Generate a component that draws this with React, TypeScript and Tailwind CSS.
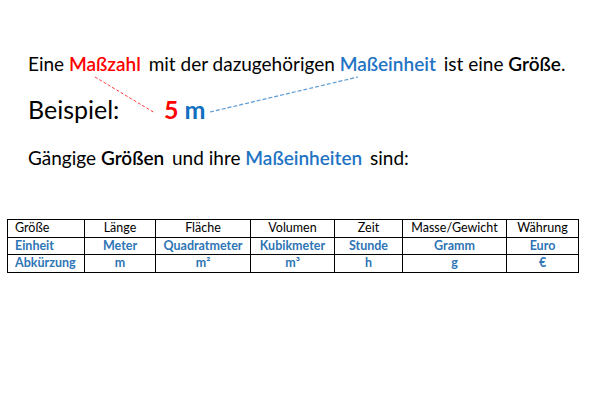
const rows = [
  {
    label: "Größe",
    bold: false,
    cells: ["Länge", "Fläche", "Volumen", "Zeit", "Masse/Gewicht", "Währung"],
  },
  {
    label: "Einheit",
    bold: true,
    cells: ["Meter", "Quadratmeter", "Kubikmeter", "Stunde", "Gramm", "Euro"],
  },
  {
    label: "Abkürzung",
    bold: true,
    cells: ["m", "m²", "m³", "h", "g", "€"],
  },
];

const widths = ["w-[77px]", "w-[71px]", "w-[95px]", "w-[84px]", "w-[68px]", "w-[104px]", "w-[72px]"];

export default function App() {
  return (
    <div className="relative h-[400px] w-[600px] overflow-hidden bg-white font-['Lato',sans-serif] text-black">
      {/* dashed connector lines */}
      <svg className="pointer-events-none absolute left-0 top-0" width="600" height="400">
        <line x1="95" y1="77" x2="155" y2="113" stroke="#ff3b3b" strokeWidth="1" strokeDasharray="3 2" />
        <line x1="210" y1="112" x2="358" y2="77" stroke="#5b9bd5" strokeWidth="1.2" strokeDasharray="4 2" />
      </svg>

      <div className="pl-[28px] pt-[52px]">
        <p className="text-[19px] leading-[24px]">
          Eine <span className="mr-[3px] font-semibold text-[#ff0000]">Maßzahl</span> mit der dazugehörigen{" "}
          <span className="mr-[3px] font-semibold text-[#1f74c4]">Maßeinheit</span> ist eine{" "}
          <span className="font-semibold">Größe</span>.
        </p>

        <div className="mt-[18px] flex items-baseline text-[25px] leading-[30px]">
          <span className="w-[136px]">Beispiel:</span>
          <span className="font-bold text-[#ff0000]">5</span>
          <span className="ml-[6px] font-bold text-[#0f6fc0]">m</span>
        </div>

        <p className="mt-[22px] text-[19px] leading-[24px]">
          Gängige <span className="mr-[3px] font-semibold">Größen</span> und ihre{" "}
          <span className="mr-[3px] font-semibold text-[#1f74c4]">Maßeinheiten</span> sind:
        </p>
      </div>

      <table className="ml-[7px] mt-[49px] border-collapse text-[12.5px] leading-[16.5px]">
        <tbody>
          {rows.map((row) => (
            <tr key={row.label}>
              <td
                className={`${widths[0]} border border-black px-[7px] text-left ${
                  row.bold ? "font-bold text-[#2e75b6]" : ""
                }`}
              >
                {row.label}
              </td>
              {row.cells.map((c, i) => (
                <td
                  key={c}
                  className={`${widths[i + 1]} border border-black px-[2px] text-center ${
                    row.bold ? "font-bold text-[#2e75b6]" : ""
                  }`}
                >
                  {c}
                </td>
              ))}
            </tr>
          ))}
        </tbody>
      </table>
    </div>
  );
}
